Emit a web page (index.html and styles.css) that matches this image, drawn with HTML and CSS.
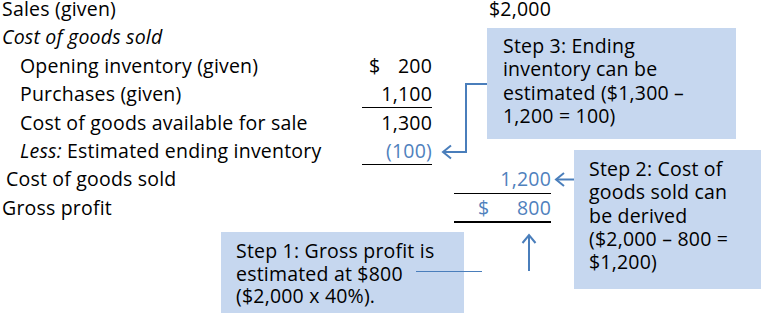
FILE: index.html
```html
<!DOCTYPE html>
<html>
<head>
<meta charset="utf-8">
<link rel="stylesheet" href="styles.css">
</head>
<body>
<div class="page">
  <div class="sheet">
    <div class="row"><div class="lab">Sales (given)</div><div class="n"></div><div></div><div class="n">$2,000</div></div>
    <div class="row"><div class="lab"><em>Cost of goods sold</em></div><div class="n"></div><div></div><div class="n"></div></div>
    <div class="row"><div class="lab ind">Opening inventory (given)</div><div class="n split s1"><span>$</span><span>200</span></div><div></div><div class="n"></div></div>
    <div class="row"><div class="lab ind">Purchases (given)</div><div class="n u">1,100</div><div></div><div class="n"></div></div>
    <div class="row"><div class="lab ind">Cost of goods available for sale</div><div class="n">1,300</div><div></div><div class="n"></div></div>
    <div class="row"><div class="lab ind"><em>Less:</em> Estimated ending inventory</div><div class="n u blue">(100)</div><div></div><div class="n"></div></div>
    <div class="row"><div class="lab ind2">Cost of goods sold</div><div class="n"></div><div></div><div class="n u blue">1,200</div></div>
    <div class="row"><div class="lab">Gross profit</div><div class="n"></div><div></div><div class="n uu blue split s2"><span>$</span><span>800</span></div></div>
  </div>

  <div class="callout c3">Step 3: Ending<br>inventory can be<br>estimated ($1,300 –<br>1,200 = 100)</div>
  <div class="callout c2">Step 2: Cost of<br>goods sold can<br>be derived<br>($2,000 – 800 =<br>$1,200)</div>
  <div class="callout c1">Step 1: Gross profit is<br>estimated at $800<br>($2,000 x 40%).</div>

  <svg class="wires" width="761" height="313" viewBox="0 0 761 313">
    <g fill="none" stroke="#4a7ebb" stroke-width="2" stroke-linejoin="miter">
      <path d="M487 84 H466 V152 H443"/>
      <path d="M451 145.5 L443 152 L451 158.5"/>
      <path d="M574 179.5 H556"/>
      <path d="M564 173 L556 179.5 L564 186"/>
      <path d="M529 271 V235"/>
      <path d="M522.5 243 L529 235 L535.5 243"/>
    </g>
    <path d="M416 271.5 H482" stroke="#4a7ebb" stroke-width="1.2" fill="none"/>
  </svg>
</div>
</body>
</html>
```

FILE: styles.css
```css
html, body {
  margin: 0;
  padding: 0;
  background: #ffffff;
}
body {
  font-family: "Open Sans", "Noto Sans", "Liberation Sans", sans-serif;
  font-size: 19.5px;
  letter-spacing: 0.2px;
  color: #000000;
}
.page {
  position: relative;
  width: 761px;
  height: 313px;
}
.sheet {
  display: flex;
  flex-direction: column;
}
.row {
  display: grid;
  grid-template-columns: 362px 70px 22px 97px;
  height: 28.4px;
  align-items: start;
}
.lab {
  line-height: 18px;
  padding-left: 2px;
  white-space: nowrap;
}
.lab.ind { padding-left: 20px; }
.lab.ind2 { padding-left: 6px; }
.n {
  line-height: 18px;
  padding-bottom: 4.3px;
  text-align: right;
  white-space: nowrap;
}
.split {
  display: flex;
  justify-content: space-between;
}
.s1 { padding-left: 7px; }
.s2 { padding-left: 24px; }
.u { border-bottom: 1px solid #000000; }
.uu { border-bottom: 2px solid #000000; }
.blue { color: #4f81bd; }
.callout {
  position: absolute;
  background: #c6d7ef;
  white-space: nowrap;
  box-sizing: border-box;
  line-height: 23.3px;
  overflow: hidden;
}
.c3 {
  left: 487px;
  top: 28px;
  width: 249px;
  height: 111px;
  padding: 6px 0 0 16px;
}
.c2 {
  left: 574px;
  top: 150px;
  width: 187px;
  height: 139px;
  padding: 7px 0 0 15px;
}
.c1 {
  left: 221px;
  top: 232px;
  width: 243px;
  height: 81px;
  padding: 8px 0 0 15px;
  line-height: 22.6px;
}
.wires {
  position: absolute;
  left: 0;
  top: 0;
  pointer-events: none;
}
```
